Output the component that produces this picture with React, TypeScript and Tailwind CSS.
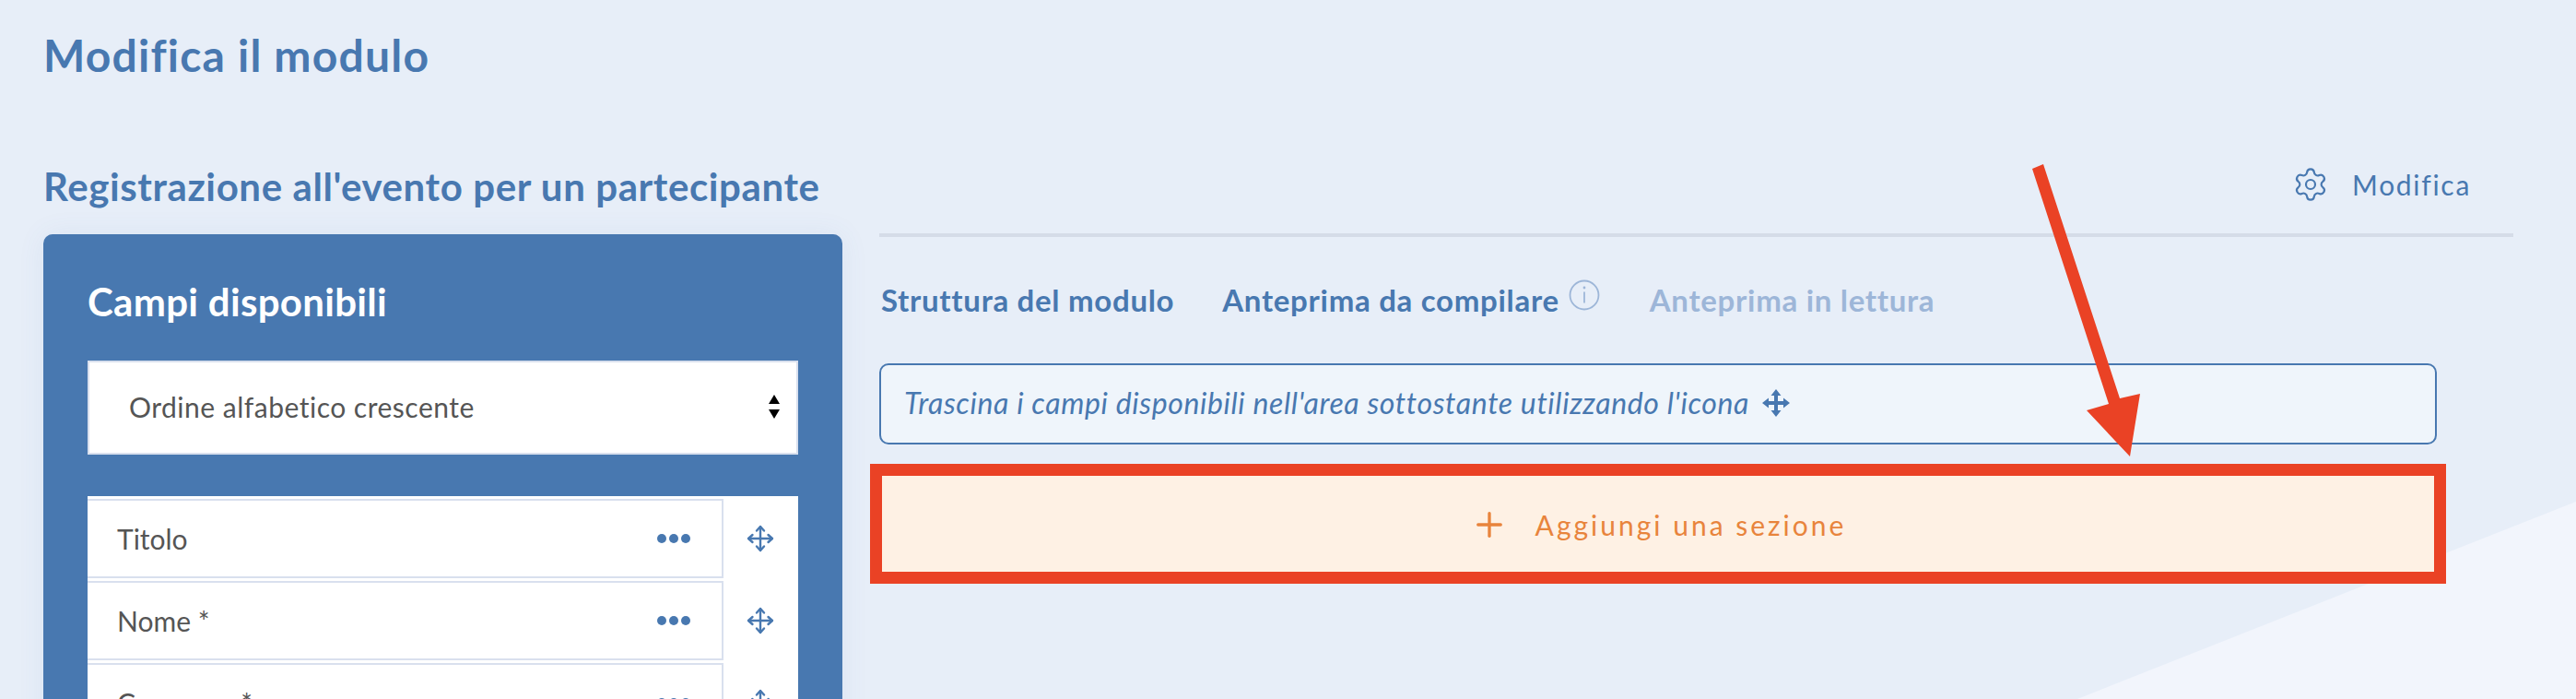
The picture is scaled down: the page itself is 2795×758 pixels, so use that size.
import React from "react";
import { Settings, Plus } from "lucide-react";

function MoveThin({ className }: { className?: string }) {
  return (
    <svg viewBox="0 0 30 30" className={className} fill="none" stroke="currentColor" strokeWidth="2.4" strokeLinecap="round" strokeLinejoin="round">
      <path d="M15 2.5v25M2.5 15h25" />
      <path d="M11 6.5 15 2l4 4.5M11 23.5l4 4.5 4-4.5M6.5 11 2 15l4.5 4M23.5 11l4.5 4-4.5 4" />
    </svg>
  );
}

function MoveSolid({ className }: { className?: string }) {
  return (
    <svg viewBox="0 0 30 30" className={className} fill="currentColor">
      <path d="M13 5h4v8h8v4h-8v8h-4v-8H5v-4h8z" />
      <path d="M15 0l5.5 7h-11zM15 30l-5.5-7h11zM0 15l7-5.5v11zM30 15l-7 5.5v-11z" />
    </svg>
  );
}

function Field({ label }: { label: string }) {
  return (
    <div className="flex h-[89px] shrink-0">
      <div className="flex h-[86px] w-[690px] items-center justify-between border-y-2 border-r-2 border-[#d9e0ee] pl-[32px] pr-[34px] text-[30px] text-[#555555]">
        <span>{label}</span>
        <span className="flex gap-[3px]">
          <span className="h-[10px] w-[10px] rounded-full bg-[#4878b0]" />
          <span className="h-[10px] w-[10px] rounded-full bg-[#4878b0]" />
          <span className="h-[10px] w-[10px] rounded-full bg-[#4878b0]" />
        </span>
      </div>
      <div className="flex h-[86px] w-[80px] items-center justify-center text-[#4878b0]">
        <MoveThin className="h-[30px] w-[30px]" />
      </div>
    </div>
  );
}

export default function App() {
  return (
    <div className="relative h-[758px] w-full overflow-hidden bg-[#e7eef8] font-['Lato',sans-serif]">
      <div className="absolute inset-0 bg-[#f2f5fc] [clip-path:polygon(2795px_544px,2795px_758px,2254px_758px)]" />
      <div className="relative">
        <h1 className="pl-[47px] pt-[32px] text-[48px] font-bold leading-[56px] tracking-[1.2px] text-[#4878b0]">Modifica il modulo</h1>
        <div className="mt-[91px] flex pl-[47px]">
          <div className="w-[867px] shrink-0">
            <h2 className="text-[42px] font-bold leading-[46px] tracking-[0.6px] text-[#4878b0]">Registrazione all'evento per un partecipante</h2>
            <div className="mt-[29px] rounded-t-[10px] bg-[#4878b0] px-[48px] pt-[48px] shadow-[0_0_30px_rgba(72,120,176,0.08)]">
              <h3 className="text-[42px] font-bold leading-[50px] tracking-[0.3px] text-white">Campi disponibili</h3>
              <div className="mt-[39px] flex h-[102px] items-center justify-between border-2 border-[#d9e0ee] bg-white pb-[2px] pl-[43px] pr-[17px] text-[30px] tracking-[0.5px] text-[#555555]">
                <span>Ordine alfabetico crescente</span>
                <svg viewBox="0 0 14 26" className="h-[26px] w-[14px] fill-black">
                  <path d="M7 0l6 10H1zM7 26L1 16h12z" />
                </svg>
              </div>
              <div className="mt-[45px] flex flex-col bg-white pt-[3px]">
                <Field label="Titolo" />
                <Field label="Nome *" />
                <Field label="Cognome *" />
              </div>
            </div>
          </div>
          <div className="ml-[40px] w-[1773px] shrink-0">
            <div className="flex h-[78px] items-center justify-end border-b-4 border-[#d5dce8] pb-[32px] pr-[46px] text-[#4878b0]">
              <Settings className="h-[40px] w-[40px]" strokeWidth={1.3} />
              <span className="ml-[25px] text-[30px] tracking-[1.7px]">Modifica</span>
            </div>
            <div className="mt-[39px] flex h-[60px] items-center pl-[2px] text-[33px] font-bold tracking-[0.7px]">
              <span className="text-[#4878b0]">Struttura del modulo</span>
              <span className="ml-[52px] text-[#4878b0]">Anteprima da compilare</span>
              <svg viewBox="0 0 34 34" className="mb-[12px] ml-[10px] h-[34px] w-[34px] text-[#9db6d8]" fill="none" stroke="currentColor" strokeWidth="1.8">
                <circle cx="17" cy="17" r="15.5" />
                <path d="M17 13.5v12" />
                <circle cx="17" cy="9" r="1.4" fill="currentColor" stroke="none" />
              </svg>
              <span className="ml-[54px] text-[#9db6d8]">Anteprima in lettura</span>
            </div>
            <div className="mt-[38px] flex h-[88px] w-[1690px] items-center rounded-[10px] border-2 border-[#4878b0] bg-[#eff5fb] pb-[2px] pl-[25px] text-[32px] italic tracking-[0.63px] text-[#4878b0]">
              <span>Trascina i campi disponibili nell'area sottostante utilizzando l'icona</span>
              <MoveSolid className="ml-[14px] h-[30px] w-[30px]" />
            </div>
            <div className="-ml-[10px] mt-[21px] flex h-[130px] w-[1710px] items-center justify-center border-[13px] border-[#ea4225] bg-[#fef1e4] pt-[2px] text-[#e8843c]">
              <Plus className="h-[42px] w-[42px]" strokeWidth={1.9} />
              <span className="ml-[29px] text-[30px] tracking-[3px]">Aggiungi una sezione</span>
            </div>
          </div>
        </div>
      </div>
      <svg className="absolute inset-0 h-[758px] w-[2795px]" viewBox="0 0 2795 758" fill="#ea4225">
        <path d="M2205 183 2217 178 2300 432 2322 427 2311 495 2264 445 2288 438z" />
      </svg>
    </div>
  );
}
